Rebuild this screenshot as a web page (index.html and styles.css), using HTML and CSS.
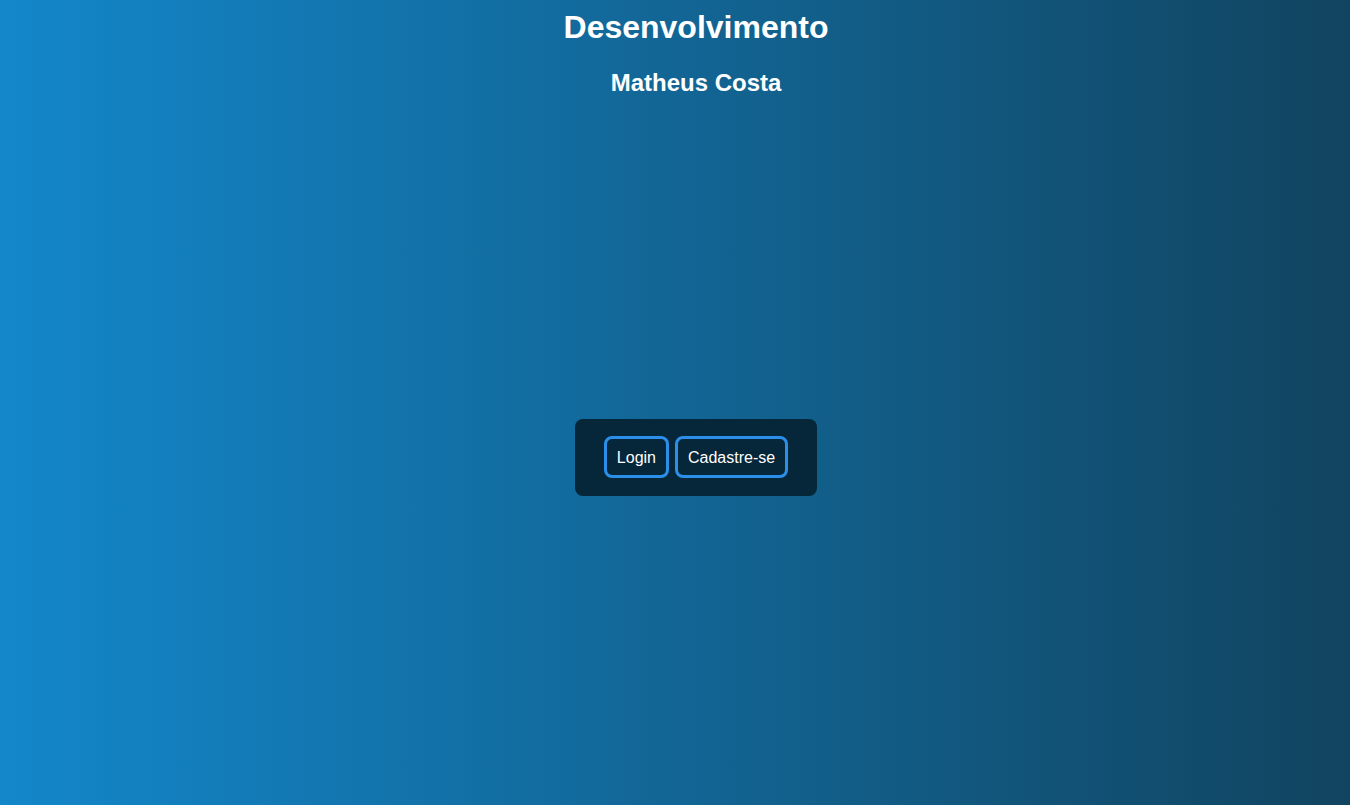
FILE: index.html
```html
<!DOCTYPE html>
<html lang="pt-BR">
<head>
<meta charset="utf-8">
<title>Desenvolvimento</title>
<link rel="stylesheet" href="styles.css">
</head>
<body>
<div class="page">
  <header class="header">
    <h1 class="title">Desenvolvimento</h1>
    <h2 class="subtitle">Matheus Costa</h2>
  </header>
  <main class="main">
    <div class="panel">
      <button class="btn">Login</button>
      <button class="btn">Cadastre-se</button>
    </div>
  </main>
</div>
</body>
</html>
```
FILE: styles.css
```css
html, body {
  margin: 0;
  padding: 0;
  height: 100%;
}
body {
  font-family: "Liberation Sans", Arial, sans-serif;
  background: linear-gradient(to right, #1387ca, #114460);
  color: #fff;
}
.page {
  min-height: 100%;
  display: flex;
  flex-direction: column;
  padding-left: 42px;
  box-sizing: border-box;
}
.header {
  display: flex;
  flex-direction: column;
  align-items: center;
  padding-top: 9px;
  height: 110px;
  box-sizing: border-box;
}
.title {
  margin: 0;
  font-size: 32px;
  font-weight: bold;
  line-height: 37px;
}
.subtitle {
  margin: 23px 0 0;
  font-size: 24px;
  font-weight: bold;
  line-height: 28px;
}
.main {
  flex: 1;
  display: flex;
  align-items: center;
  justify-content: center;
}
.panel {
  display: flex;
  gap: 6px;
  padding: 17px 29px 18px 29px;
  background: #06263a;
  border-radius: 8px;
}
.btn {
  font-family: "Liberation Sans", Arial, sans-serif;
  font-size: 16px;
  color: #fff;
  background: #06263a;
  border: 3px solid #2b8ee8;
  border-radius: 8px;
  padding: 1px 10px 0;
  height: 42px;
  cursor: pointer;
}
```
